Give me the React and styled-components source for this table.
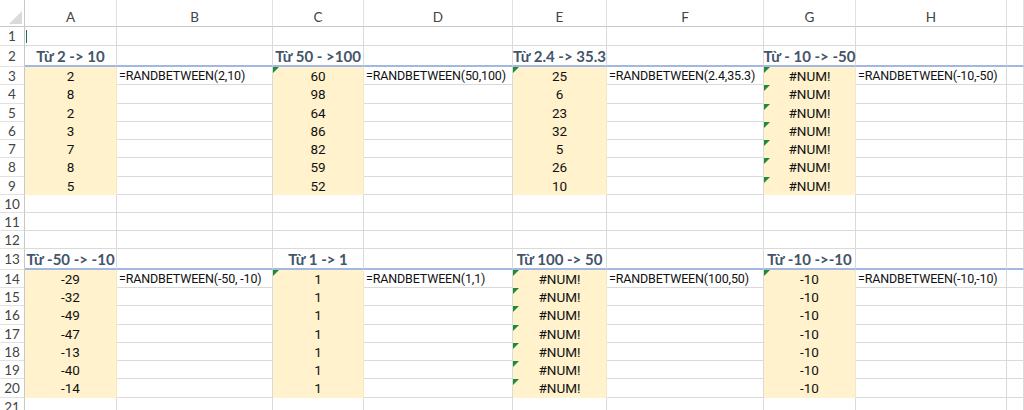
import styled, { createGlobalStyle } from 'styled-components';

const GlobalStyle = createGlobalStyle`
  body {
    margin: 0;
    background: #fff;
    font-family: Lato, "Liberation Sans", sans-serif;
  }
`;

const TEMPLATE = '25px 92px 156px 91px 149px 94px 157px 92px 151px 1fr';
const LETTERS = ['A', 'B', 'C', 'D', 'E', 'F', 'G', 'H', ''];

const HEIGHTS = {
  1: 19, 2: 21, 3: 18, 4: 19, 5: 18, 6: 18, 7: 18, 8: 19, 9: 18, 10: 18, 11: 18, 12: 18,
  13: 21, 14: 18, 15: 18, 16: 19, 17: 18, 18: 18, 19: 18, 20: 19, 21: 18,
};

const blocks = [
  {
    head: 2,
    titles: ['Từ 2 -> 10', 'Từ 50 - >100', 'Từ 2.4 -> 35.3', 'Từ - 10 -> -50'],
    formulas: ['=RANDBETWEEN(2,10)', '=RANDBETWEEN(50,100)', '=RANDBETWEEN(2.4,35.3)', '=RANDBETWEEN(-10,-50)'],
    values: [
      ['2', '8', '2', '3', '7', '8', '5'],
      ['60', '98', '64', '86', '82', '59', '52'],
      ['25', '6', '23', '32', '5', '26', '10'],
      Array(7).fill('#NUM!'),
    ],
    flags: [[], [0], [0], [0, 1, 2, 3, 4, 5, 6]],
  },
  {
    head: 13,
    titles: ['Từ -50 -> -10', 'Từ 1 -> 1', 'Từ 100 -> 50', 'Từ -10 ->-10'],
    formulas: ['=RANDBETWEEN(-50, -10)', '=RANDBETWEEN(1,1)', '=RANDBETWEEN(100,50)', '=RANDBETWEEN(-10,-10)'],
    values: [
      ['-29', '-32', '-49', '-47', '-13', '-40', '-14'],
      Array(7).fill('1'),
      Array(7).fill('#NUM!'),
      Array(7).fill('-10'),
    ],
    flags: [[], [0], [0, 1, 2, 3, 4, 5, 6], [0]],
  },
];

// build the sheet as rows of 9 cells (A..I)
function buildRows() {
  const rows = [];
  for (let r = 1; r <= 21; r++) {
    const cells = Array.from({ length: 9 }, () => ({}));
    if (r === 1) cells[0].cursor = true;
    blocks.forEach((b) => {
      if (r === b.head) {
        cells.forEach((c) => (c.head = true));
        b.titles.forEach((t, i) => {
          cells[i * 2].text = t;
          cells[i * 2].bold = true;
        });
      }
      const k = r - b.head - 1;
      if (k >= 0 && k < 7) {
        b.values.forEach((vals, i) => {
          cells[i * 2] = {
            text: vals[k],
            fill: true,
            flag: b.flags[i].includes(k),
          };
        });
        if (k === 0) {
          b.formulas.forEach((f, i) => {
            cells[i * 2 + 1].text = f;
            cells[i * 2 + 1].left = true;
          });
        }
      }
    });
    rows.push({ num: r, cells });
  }
  return rows;
}

const Sheet = styled.div`
  height: 410px;
  overflow: hidden;
  background: #fff;
`;

const Row = styled.div`
  display: grid;
  grid-template-columns: ${TEMPLATE};
  height: ${(p) => p.$h}px;
`;

const Corner = styled.div`
  display: flex;
  align-items: flex-end;
  justify-content: flex-end;
  padding: 0 2px 2px 0;
  border-right: 1px solid #c8c8c8;
  border-bottom: 1px solid #c8c8c8;
`;

const ColHead = styled.div`
  display: flex;
  align-items: center;
  justify-content: center;
  padding-top: 8px;
  font-size: 13.5px;
  color: #444;
  border-right: 1px solid #e1e1e1;
  border-bottom: 1px solid #c8c8c8;
`;

const RowHead = styled.div`
  display: flex;
  align-items: center;
  justify-content: center;
  font-size: 13.5px;
  color: #444;
  border-right: 1px solid #c8c8c8;
  border-bottom: 1px solid #e1e1e1;
`;

const Cell = styled.div`
  position: relative;
  z-index: ${(p) => (p.$left ? 1 : 0)};
  display: flex;
  align-items: center;
  justify-content: ${(p) => (p.$left ? 'flex-start' : 'center')};
  padding: 0 2px;
  white-space: nowrap;
  min-width: 0;
  font-family: ${(p) => (p.$bold ? 'Lato, sans-serif' : 'Roboto, Lato, sans-serif')};
  font-size: ${(p) => (p.$bold ? '15px' : p.$left ? '12.5px' : '13.5px')};
  letter-spacing: ${(p) => (p.$left ? '-0.15px' : '0')};
  font-weight: ${(p) => (p.$bold ? 700 : 400)};
  color: ${(p) => (p.$bold ? '#44546a' : '#111')};
  background: ${(p) => (p.$fill ? '#fff2cc' : '#fff')};
  border-right: 1px solid ${(p) => (p.$fill ? '#f3e7c6' : '#dadada')};
  border-bottom: ${(p) =>
    p.$head ? '2px solid #a2b8e1' : `1px solid ${p.$fill ? '#fff2cc' : '#dadada'}`};

  ${(p) =>
    p.$flag &&
    `
    &::before {
      content: '';
      position: absolute;
      left: 0;
      top: 0;
      border-top: 6px solid #1e8a3a;
      border-right: 6px solid transparent;
    }
  `}
`;

const Caret = styled.span`
  align-self: center;
  width: 1px;
  height: 13px;
  background: #217346;
  margin-right: auto;
  margin-left: -1px;
`;

const App = () => {
  const rows = buildRows();
  return (
    <>
      <GlobalStyle />
      <Sheet>
        <Row $h={27}>
          <Corner>
            <svg width="13" height="13" viewBox="0 0 13 13">
              <polygon points="13,0 13,13 0,13" fill="#dadada" />
            </svg>
          </Corner>
          {LETTERS.map((l, i) => (
            <ColHead key={i}>{l}</ColHead>
          ))}
        </Row>
        {rows.map((row) => (
          <Row key={row.num} $h={HEIGHTS[row.num]}>
            <RowHead>{row.num}</RowHead>
            {row.cells.map((c, i) => (
              <Cell
                key={i}
                $fill={c.fill}
                $flag={c.flag}
                $head={c.head}
                $bold={c.bold}
                $left={c.left}
              >
                {c.cursor ? <Caret /> : c.text}
              </Cell>
            ))}
          </Row>
        ))}
      </Sheet>
    </>
  );
};

export default App;
